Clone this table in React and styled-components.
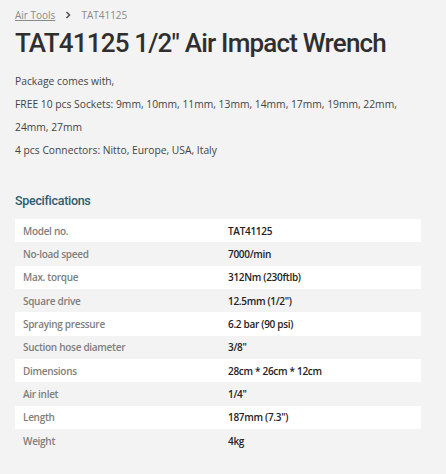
import styled, { createGlobalStyle } from 'styled-components'

const GlobalStyle = createGlobalStyle`
  html, body {
    margin: 0;
    padding: 0;
    background-color: #f3f3f3;
  }
  body {
    font-family: "Open Sans", "Liberation Sans", sans-serif;
    color: #444;
  }
`

const Page = styled.main`
  padding: 7px 10px 0 15px;
`

const Breadcrumb = styled.nav`
  display: flex;
  align-items: center;
  gap: 7px;
  font-size: 10px;
  line-height: 16px;
  color: #8a8a8a;
`

const Crumb = styled.a`
  color: #8a8a8a;
  text-decoration: underline;
`

const Chevron = styled.svg`
  width: 8px;
  height: 8px;
  margin: 0 2px;
`

const Title = styled.h1`
  margin: 3px 0 0;
  font-family: Roboto, "Open Sans", sans-serif;
  font-weight: 500;
  font-size: 26px;
  line-height: 34px;
  color: #2f2f2f;
  letter-spacing: -0.8px;
  white-space: nowrap;
`

const Description = styled.div`
  margin-top: 10px;
  width: 400px;
  font-size: 10.3px;
  line-height: 23px;
  color: #444;
`

const Line = styled.p`
  margin: 0;
`

const SpecHeading = styled.h2`
  margin: 30px 0 0;
  font-family: Roboto, "Open Sans", sans-serif;
  font-weight: 500;
  font-size: 12.5px;
  line-height: 18px;
  letter-spacing: -0.3px;
  color: #2d5b6e;
`

const Table = styled.table`
  margin-top: 9px;
  width: 406px;
  border-collapse: collapse;
  font-size: 10px;
  font-weight: 600;
  letter-spacing: -0.3px;
`

const Row = styled.tr`
  background-color: ${(p) => (p.$odd ? '#ffffff' : 'transparent')};
`

const Label = styled.td`
  width: 205px;
  padding: 0 8px;
  height: 23.33px;
  color: #7e7e7e;
  box-sizing: border-box;
`

const Value = styled.td`
  padding: 0 8px;
  height: 23.33px;
  color: #222;
`

const specs = [
  ['Model no.', 'TAT41125'],
  ['No-load speed', '7000/min'],
  ['Max. torque', '312Nm (230ftlb)'],
  ['Square drive', '12.5mm (1/2")'],
  ['Spraying pressure', '6.2 bar (90 psi)'],
  ['Suction hose diameter', '3/8"'],
  ['Dimensions', '28cm * 26cm * 12cm'],
  ['Air inlet', '1/4"'],
  ['Length', '187mm (7.3")'],
  ['Weight', '4kg'],
]

export default function App() {
  return (
    <>
      <GlobalStyle />
      <Page>
        <Breadcrumb>
          <Crumb>Air Tools</Crumb>
          <Chevron viewBox="0 0 8 8">
            <path d="M2.5 1 L5.5 4 L2.5 7" fill="none" stroke="#555" strokeWidth="1.6" />
          </Chevron>
          <span>TAT41125</span>
        </Breadcrumb>
        <Title>TAT41125 1/2″ Air Impact Wrench</Title>
        <Description>
          <Line>Package comes with,</Line>
          <Line>FREE 10 pcs Sockets: 9mm, 10mm, 11mm, 13mm, 14mm, 17mm, 19mm, 22mm, 24mm, 27mm</Line>
          <Line>4 pcs Connectors: Nitto, Europe, USA, Italy</Line>
        </Description>
        <SpecHeading>Specifications</SpecHeading>
        <Table>
          <tbody>
            {specs.map(([k, v], i) => (
              <Row key={k} $odd={i % 2 === 0}>
                <Label>{k}</Label>
                <Value>{v}</Value>
              </Row>
            ))}
          </tbody>
        </Table>
      </Page>
    </>
  )
}
